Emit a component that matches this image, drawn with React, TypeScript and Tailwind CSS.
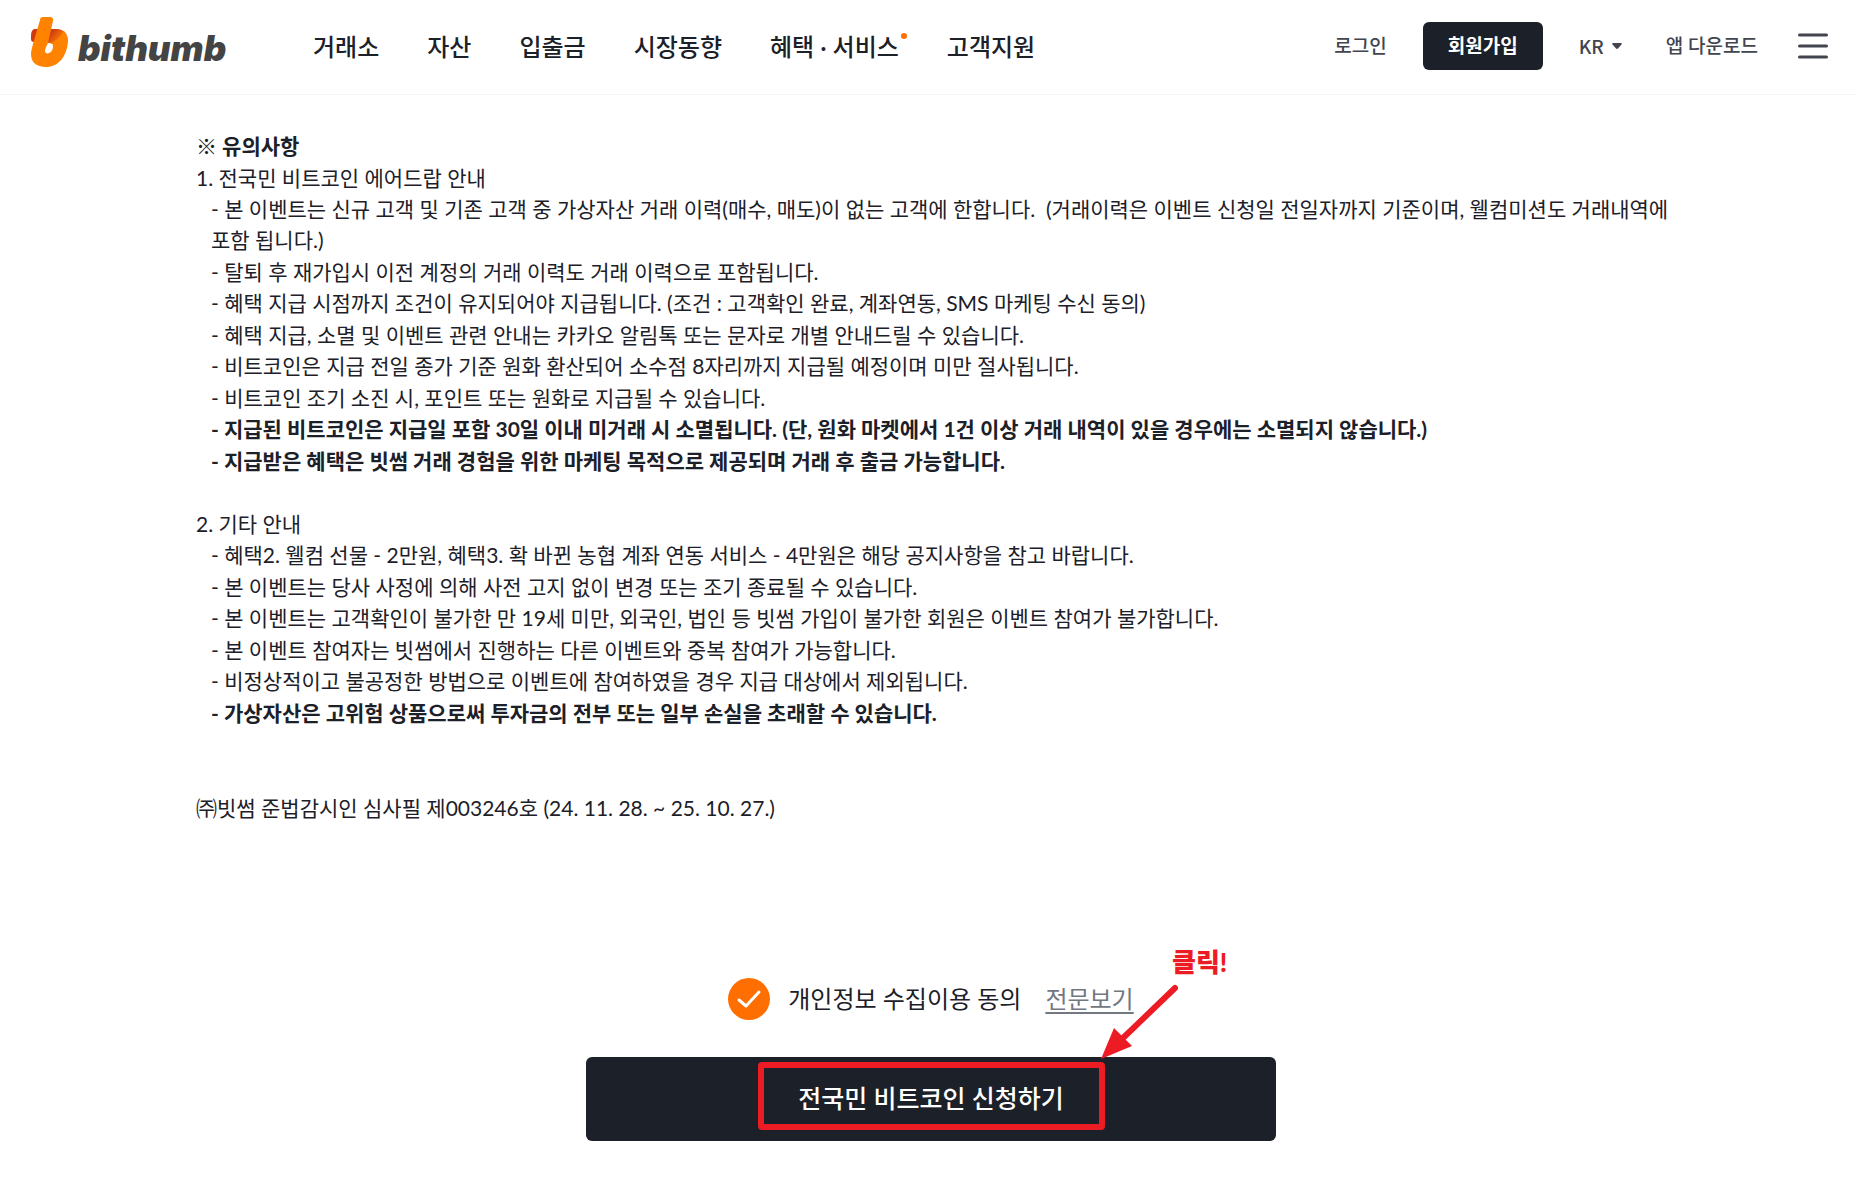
import { useState } from "react";

const navItems = [
  { label: "거래소" },
  { label: "자산" },
  { label: "입출금" },
  { label: "시장동향" },
  { label: "혜택 · 서비스", isNew: true },
  { label: "고객지원" },
];

type Notice = { text: string; bold?: boolean };

const airdropNotices: Notice[] = [
  {
    text: "- 본 이벤트는 신규 고객 및 기존 고객 중 가상자산 거래 이력(매수, 매도)이 없는 고객에 한합니다.\u00a0 (거래이력은 이벤트 신청일 전일자까지 기준이며, 웰컴미션도 거래내역에 포함 됩니다.)",
  },
  { text: "- 탈퇴 후 재가입시 이전 계정의 거래 이력도 거래 이력으로 포함됩니다." },
  {
    text: "- 혜택 지급 시점까지 조건이 유지되어야 지급됩니다. (조건 : 고객확인 완료, 계좌연동, SMS 마케팅 수신 동의)",
  },
  {
    text: "- 혜택 지급, 소멸 및 이벤트 관련 안내는 카카오 알림톡 또는 문자로 개별 안내드릴 수 있습니다.",
  },
  {
    text: "- 비트코인은 지급 전일 종가 기준 원화 환산되어 소수점 8자리까지 지급될 예정이며 미만 절사됩니다.",
  },
  { text: "- 비트코인 조기 소진 시, 포인트 또는 원화로 지급될 수 있습니다." },
  {
    text: "- 지급된 비트코인은 지급일 포함 30일 이내 미거래 시 소멸됩니다. (단, 원화 마켓에서 1건 이상 거래 내역이 있을 경우에는 소멸되지 않습니다.)",
    bold: true,
  },
  {
    text: "- 지급받은 혜택은 빗썸 거래 경험을 위한 마케팅 목적으로 제공되며 거래 후 출금 가능합니다.",
    bold: true,
  },
];

const etcNotices: Notice[] = [
  {
    text: "- 혜택2. 웰컴 선물 - 2만원, 혜택3. 확 바뀐 농협 계좌 연동 서비스 - 4만원은 해당 공지사항을 참고 바랍니다.",
  },
  { text: "- 본 이벤트는 당사 사정에 의해 사전 고지 없이 변경 또는 조기 종료될 수 있습니다." },
  {
    text: "- 본 이벤트는 고객확인이 불가한 만 19세 미만, 외국인, 법인 등 빗썸 가입이 불가한 회원은 이벤트 참여가 불가합니다.",
  },
  { text: "- 본 이벤트 참여자는 빗썸에서 진행하는 다른 이벤트와 중복 참여가 가능합니다." },
  {
    text: "- 비정상적이고 불공정한 방법으로 이벤트에 참여하였을 경우 지급 대상에서 제외됩니다.",
  },
  {
    text: "- 가상자산은 고위험 상품으로써 투자금의 전부 또는 일부 손실을 초래할 수 있습니다.",
    bold: true,
  },
];

const Logo = (): JSX.Element => (
  <a href="#" aria-label="bithumb" className="flex items-center gap-2">
    <svg className="mb-2" width="40" height="52" viewBox="0 0 40 52" aria-hidden="true">
      <defs>
        <linearGradient id="fold" x1="0" y1="0" x2="1" y2="0.4">
          <stop offset="0" stopColor="#d23a10" />
          <stop offset="0.55" stopColor="#cf3c10" />
          <stop offset="0.95" stopColor="#ff8200" />
        </linearGradient>
      </defs>
      <path
        d="M4 13H27C34 13 38 18 37 25L30 30L20 27L4 26C2 26 1 25 1 23V20C1 16 2 14 4 13Z"
        fill="url(#fold)"
      />
      <path
        fillRule="evenodd"
        d="M13 1H20C22 1 24 3 23 5L18 27C24 27 29 23 34 15C37 18 38 21 38 25C37 41 28 51 16 51C6 51 1 46 1 38C1 35 2 32 3 28L10 4C10 2 11 1 13 1ZM18 27C16 31 15 33 15 35C15 37 17 38 19 37C22 36 23 33 23 30C23 28 22 27 18 27Z"
        fill="#ff8200"
      />
    </svg>
    <span className="mt-1 w-[150px] font-[Inter,sans-serif] text-[35px] leading-10 font-black text-[#444444] italic">
      bithumb
    </span>
  </a>
);

const Header = (): JSX.Element => (
  <header className="flex h-[95px] items-center border-b border-[#f3f3f4] pr-[29px] pb-0.5 pl-[30px]">
    <Logo />
    <nav className="mt-0.5 ml-[85px] flex gap-12 text-2xl font-medium">
      {navItems.map((item) => (
        <a key={item.label} href="#" className="relative whitespace-nowrap">
          {item.label}
          {item.isNew && (
            <span className="absolute top-0.5 -right-2 size-[6px] rounded-full bg-[#ff6e00]" />
          )}
        </a>
      ))}
    </nav>
    <div className="ml-auto flex items-center text-[19px] font-medium whitespace-nowrap text-[#42444e]">
      <a href="#">로그인</a>
      <button className="ml-9 h-12 w-[120px] rounded-md bg-[#1c2028] font-bold text-white">
        회원가입
      </button>
      <button className="ml-9 flex items-center gap-2 font-['Noto_Sans_CJK_KR',sans-serif]">
        KR
        <svg width="10" height="6" viewBox="0 0 10 6" aria-hidden="true">
          <path d="M1 0H9C10 0 10 1 9.500 1.500L6 5.500C5.500 6 4.500 6 4 5.500L0.500 1.500C0 1 0 0 1 0Z" fill="#42444e" />
        </svg>
      </button>
      <a href="#" className="ml-11">
        앱 다운로드
      </a>
      <button aria-label="전체 메뉴" className="ml-10">
        <svg width="30" height="26" viewBox="0 0 30 26" aria-hidden="true">
          <path d="M1.500 2H28.500M1.500 13H28.500M1.500 24H28.500" stroke="#42444e" strokeWidth="3" strokeLinecap="round" />
        </svg>
      </button>
    </div>
  </header>
);

const NoticeList = ({ items }: { items: Notice[] }): JSX.Element => (
  <ul className="pl-[15px]">
    {items.map((item) => (
      <li key={item.text} className={item.bold ? "font-bold odd:pb-px" : "odd:pb-px"}>
        {item.text}
      </li>
    ))}
  </ul>
);

const App = (): JSX.Element => {
  const [agreed, setAgreed] = useState(true);

  return (
    <div className="min-h-screen bg-white font-[Lato,'Noto_Sans_CJK_KR',sans-serif] text-[#1c2028]">
      <Header />
      <main className="pt-[35px] pb-15 pl-[5px]">
        <section className="mx-auto max-w-[1490px] pl-[10px] text-[21px] leading-[31px] break-keep">
          <h2 className="pb-px font-bold">※ 유의사항</h2>
          <p>1. 전국민 비트코인 에어드랍 안내</p>
          <NoticeList items={airdropNotices} />
          <p className="mt-8">2. 기타 안내</p>
          <NoticeList items={etcNotices} />
          <p className="mt-16">㈜빗썸 준법감시인 심사필 제003246호 (24. 11. 28. ~ 25. 10. 27.)</p>
        </section>

        <section className="mx-auto mt-[155px] max-w-[690px]">
          <div className="flex items-center justify-center text-2xl">
            <label className="flex items-center gap-[18px]">
              <span className="relative size-[42px]">
                <input
                  type="checkbox"
                  checked={agreed}
                  onChange={() => setAgreed(!agreed)}
                  className="block size-[42px] appearance-none rounded-full bg-gray-300 checked:bg-[#ff6e00]"
                />
                <svg
                  className="pointer-events-none absolute inset-0"
                  width="42"
                  height="42"
                  viewBox="0 0 42 42"
                  aria-hidden="true"
                >
                  <path
                    d="M11 22L18 28L31 14"
                    fill="none"
                    stroke="#fff"
                    strokeWidth="3"
                    strokeLinecap="round"
                    strokeLinejoin="round"
                  />
                </svg>
              </span>
              개인정보 수집이용 동의
            </label>
            <a href="#" className="ml-6 text-[#72787f] underline decoration-2 underline-offset-4">
              전문보기
            </a>
          </div>
          <div className="relative mt-[37px]">
            <button className="block h-[84px] w-full rounded-md bg-[#1c2028] text-[25px] font-medium text-white">
              전국민 비트코인 신청하기
            </button>
            <div className="pointer-events-none absolute top-[5px] left-[172px] h-[68px] w-[347px] rounded border-[6px] border-[#ed1c24]" />
            <svg
              className="pointer-events-none absolute -top-[74px] left-[514px]"
              width="80"
              height="80"
              viewBox="0 0 80 80"
              aria-hidden="true"
            >
              <path d="M75 5L22 56" stroke="#ed1c24" strokeWidth="6" strokeLinecap="round" />
              <path d="M1 76L14 45L32 63Z" fill="#ed1c24" />
            </svg>
            <span className="pointer-events-none absolute -top-[114px] left-[586px] text-[26px] font-black text-[#ed1c24]">
              클릭!
            </span>
          </div>
        </section>
      </main>
    </div>
  );
};

export default App;
